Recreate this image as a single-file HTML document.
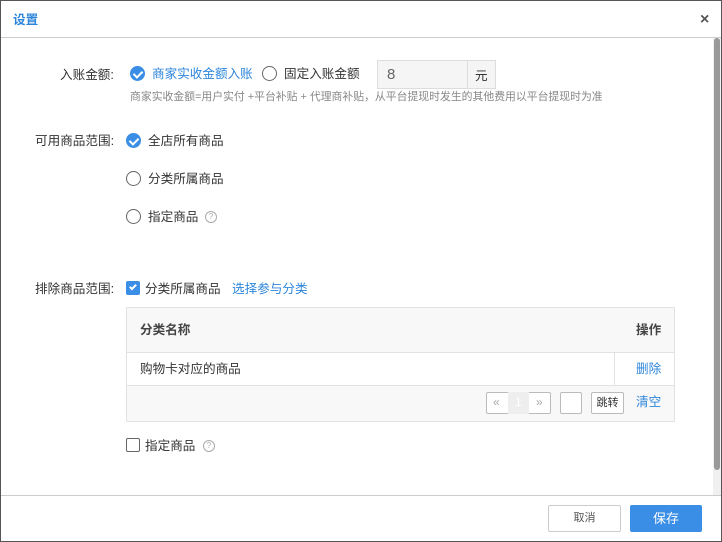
<!DOCTYPE html>
<html><head><meta charset="utf-8"><style>
*{margin:0;padding:0;box-sizing:border-box}
body{width:722px;height:542px;overflow:hidden;background:#fff;font-family:"Liberation Sans","Noto Sans CJK SC",sans-serif;font-size:12.6px;color:#333;position:relative}
.a{position:absolute;white-space:nowrap}
.t{margin-top:-2px}
.frame{position:absolute;left:0;top:0;width:722px;height:542px;border:1px solid #555}
.rchk{position:absolute;width:15px;height:15px;border-radius:50%;background:#3a8ee6}
.rchk:after{content:"";position:absolute;left:5px;top:3px;width:4px;height:7px;border:solid #fff;border-width:0 2px 2px 0;transform:rotate(45deg)}
.rad{position:absolute;width:15px;height:15px;border-radius:50%;border:1px solid #666;background:#fff}
.q{position:absolute;width:12px;height:12px;border-radius:50%;border:1px solid #aaa;color:#aaa;font-size:8px;line-height:10px;text-align:center}
.blue{color:#2d86db}
</style></head><body>
<div class="frame"></div>
<div class="a blue" style="left:13px;top:9px;font-size:12.6px;font-weight:bold">设置</div>
<div class="a" style="left:700px;top:11px;font-size:16px;color:#555;font-weight:bold">×</div>
<div class="a" style="left:1px;top:37px;width:720px;height:1px;background:#ccc"></div>
<div class="a" style="left:713px;top:38px;width:8px;height:457px;background:#f0f0f0"></div>
<div class="a" style="left:714px;top:38px;width:6px;height:432px;background:#999;border-radius:3px"></div>

<div class="a t" style="left:60px;top:66px">入账金额:</div>
<div class="rchk" style="left:130px;top:66px"></div>
<div class="a blue t" style="left:152px;top:65px">商家实收金额入账</div>
<div class="rad" style="left:262px;top:66px"></div>
<div class="a t" style="left:284px;top:65px">固定入账金额</div>
<div class="a" style="left:377px;top:60px;width:119px;height:29px;border:1px solid #ddd;background:#f5f5f5"></div>
<div class="a" style="left:467px;top:60px;width:1px;height:29px;background:#ddd"></div>
<div class="a" style="left:387px;top:66px;font-size:15px;color:#666">8</div>
<div class="a t" style="left:475px;top:67px">元</div>
<div class="a t" style="left:130px;top:90px;font-size:10.85px;color:#888">商家实收金额=用户实付 +平台补贴 + 代理商补贴，从平台提现时发生的其他费用以平台提现时为准</div>

<div class="a t" style="left:35px;top:132px">可用商品范围:</div>
<div class="rchk" style="left:126px;top:133px"></div>
<div class="a t" style="left:148px;top:132px">全店所有商品</div>
<div class="rad" style="left:126px;top:171px"></div>
<div class="a t" style="left:148px;top:170px">分类所属商品</div>
<div class="rad" style="left:126px;top:209px"></div>
<div class="a t" style="left:148px;top:208px">指定商品</div>
<div class="q" style="left:205px;top:211px">?</div>

<div class="a t" style="left:35px;top:280px">排除商品范围:</div>
<div class="a" style="left:126px;top:281px;width:14px;height:14px;background:#3a8ee6;border-radius:2px"></div>
<div class="a" style="left:131px;top:283px;width:4px;height:7px;border:solid #fff;border-width:0 2px 2px 0;transform:rotate(45deg)"></div>
<div class="a t" style="left:145px;top:280px">分类所属商品</div>
<div class="a blue t" style="left:232px;top:280px">选择参与分类</div>

<div class="a" style="left:126px;top:307px;width:549px;height:115px;border:1px solid #e2e2e2;background:#f8f8f8"></div>
<div class="a" style="left:127px;top:352px;width:547px;height:34px;background:#fff;border-top:1px solid #e2e2e2;border-bottom:1px solid #e2e2e2"></div>
<div class="a" style="left:614px;top:353px;width:1px;height:32px;background:#e2e2e2"></div>
<div class="a t" style="left:140px;top:321px;font-weight:bold;color:#444">分类名称</div>
<div class="a t" style="left:636px;top:321px;font-weight:bold;color:#444">操作</div>
<div class="a t" style="left:140px;top:360px">购物卡对应的商品</div>
<div class="a blue t" style="left:636px;top:360px">删除</div>
<div class="a" style="left:486px;top:392px;width:65px;height:22px;border:1px solid #bbb;border-radius:2px;background:#fff"></div>
<div class="a" style="left:508px;top:392px;width:21px;height:22px;background:#eee"></div>
<div class="a" style="left:493px;top:395px;color:#aaa;font-size:12px">«</div>
<div class="a" style="left:515px;top:395px;color:#fff;font-size:12px">1</div>
<div class="a" style="left:536px;top:395px;color:#aaa;font-size:12px">»</div>
<div class="a" style="left:560px;top:392px;width:22px;height:22px;border:1px solid #bbb;border-radius:2px;background:#fff"></div>
<div class="a" style="left:591px;top:392px;width:33px;height:22px;border:1px solid #bbb;border-radius:2px;background:#fff;font-size:11px;line-height:20px;text-align:center">跳转</div>
<div class="a blue t" style="left:636px;top:393px">清空</div>

<div class="a" style="left:126px;top:438px;width:14px;height:14px;border:1px solid #666;border-radius:2px;background:#fff"></div>
<div class="a t" style="left:145px;top:437px">指定商品</div>
<div class="q" style="left:203px;top:440px">?</div>

<div class="a" style="left:1px;top:495px;width:720px;height:1px;background:#ccc"></div>
<div class="a" style="left:548px;top:505px;width:73px;height:27px;border:1px solid #ccc;border-radius:2px;background:#fff;font-size:11px;color:#555;line-height:25px;text-align:center">取消</div>
<div class="a" style="left:630px;top:505px;width:72px;height:27px;border-radius:2px;background:#3a8ee6;color:#fff;font-size:13px;line-height:27px;text-align:center">保存</div>
</body></html>
